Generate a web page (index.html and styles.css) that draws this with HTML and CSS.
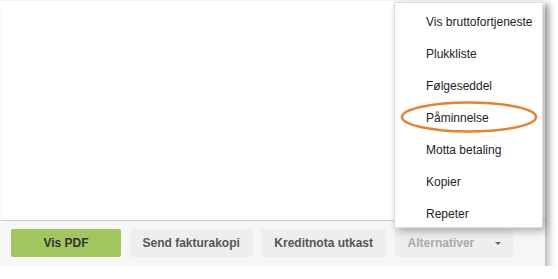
FILE: index.html
```html
<!DOCTYPE html>
<html lang="no">

<head>
    <meta charset="UTF-8">
    <title>Faktura</title>
    <link rel="stylesheet" href="styles.css">
</head>

<body>
    <div class="card">
        <div class="body"></div>
        <div class="footer">
            <a href="#" class="btn btn-green">Vis PDF</a>
            <a href="#" class="btn">Send fakturakopi</a>
            <a href="#" class="btn">Kreditnota utkast</a>
            <a href="#" class="btn btn-disabled">Alternativer<span class="caret"></span></a>
        </div>

        <ul class="menu">
            <li>Vis bruttofortjeneste</li>
            <li>Plukkliste</li>
            <li>Følgeseddel</li>
            <li>Påminnelse</li>
            <li>Motta betaling</li>
            <li>Kopier</li>
            <li>Repeter</li>
        </ul>

        <!-- markering -->
        <svg class="mark" width="140" height="34" viewBox="0 0 140 34">
            <ellipse cx="69" cy="16" rx="67" ry="14.5" fill="none" stroke="#e8812c" stroke-width="2.5" />
        </svg>
    </div>
</body>

</html>
```

FILE: styles.css
```css
* {
    padding: 0;
    margin: 0;
    box-sizing: border-box;
}

body {
    font-family: "Liberation Sans", Arial, sans-serif;
    font-size: 12px;
    background: #fff;
}

.card {
    position: relative;
    width: 544px;
    height: 266px;
    margin-left: 1px;
    background: #fff;
    border-top: 1px solid #f3f3f3;
    box-shadow: 4px 4px 7px rgba(0, 0, 0, 0.28);
    display: flex;
    flex-direction: column;
}

.body {
    flex: 1;
}

.footer {
    height: 46px;
    border-top: 1px solid #cccccc;
    background: #f6f6f6;
    padding: 8px 10px 0;
    display: flex;
    gap: 8.5px;
    align-items: flex-start;
}

.btn {
    display: flex;
    align-items: center;
    justify-content: center;
    height: 28px;
    padding: 0 13px;
    border-radius: 2px;
    background: #eeeeee;
    color: #555;
    font-weight: bold;
    text-decoration: none;
    white-space: nowrap;
}

.btn-green {
    width: 110px;
    background: #a2c65e;
    color: #333;
}

.btn-disabled {
    color: #aaa;
    padding-right: 12px;
    justify-content: flex-start;
}

.caret {
    width: 0;
    height: 0;
    margin-left: 21px;
    border-left: 3px solid transparent;
    border-right: 3px solid transparent;
    border-top: 3px solid #666;
}

.menu {
    position: absolute;
    left: 393px;
    top: 1px;
    width: 149px;
    list-style: none;
    background: #fff;
    border: 1px solid #dcdcdc;
    box-shadow: 3px 3px 8px rgba(0, 0, 0, 0.3);
}

.menu li {
    height: 32px;
    line-height: 16px;
    padding: 11px 8px 5px 31px;
    color: #222;
    white-space: nowrap;
}

.mark {
    position: absolute;
    left: 399px;
    top: 100px;
}
```
